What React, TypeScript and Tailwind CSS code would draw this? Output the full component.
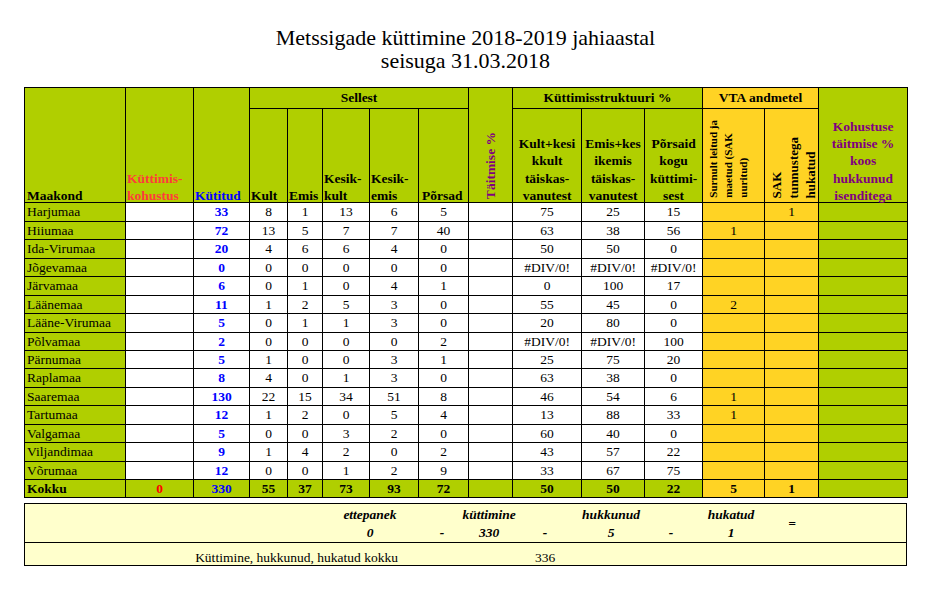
import type { ReactNode } from 'react'

const GREEN = 'bg-[#b0cf00]'
const YELLOW = 'bg-[#ffd324]'

type Row = [string, string, string, string, string, string, string, string, string, string, string, string]

const ROWS: Row[] = [
  ['Harjumaa', '33', '8', '1', '13', '6', '5', '75', '25', '15', '', '1'],
  ['Hiiumaa', '72', '13', '5', '7', '7', '40', '63', '38', '56', '1', ''],
  ['Ida-Virumaa', '20', '4', '6', '6', '4', '0', '50', '50', '0', '', ''],
  ['Jõgevamaa', '0', '0', '0', '0', '0', '0', '#DIV/0!', '#DIV/0!', '#DIV/0!', '', ''],
  ['Järvamaa', '6', '0', '1', '0', '4', '1', '0', '100', '17', '', ''],
  ['Läänemaa', '11', '1', '2', '5', '3', '0', '55', '45', '0', '2', ''],
  ['Lääne-Virumaa', '5', '0', '1', '1', '3', '0', '20', '80', '0', '', ''],
  ['Põlvamaa', '2', '0', '0', '0', '0', '2', '#DIV/0!', '#DIV/0!', '100', '', ''],
  ['Pärnumaa', '5', '1', '0', '0', '3', '1', '25', '75', '20', '', ''],
  ['Raplamaa', '8', '4', '0', '1', '3', '0', '63', '38', '0', '', ''],
  ['Saaremaa', '130', '22', '15', '34', '51', '8', '46', '54', '6', '1', ''],
  ['Tartumaa', '12', '1', '2', '0', '5', '4', '13', '88', '33', '1', ''],
  ['Valgamaa', '5', '0', '0', '3', '2', '0', '60', '40', '0', '', ''],
  ['Viljandimaa', '9', '1', '4', '2', '0', '2', '43', '57', '22', '', ''],
  ['Võrumaa', '12', '0', '0', '1', '2', '9', '33', '67', '75', '', ''],
]

const COLS = [
  'w-[101px]', 'w-[68px]', 'w-[56px]', 'w-[38px]', 'w-[35px]', 'w-[47px]', 'w-[49px]', 'w-[50px]',
  'w-[44px]', 'w-[69px]', 'w-[63px]', 'w-[58px]', 'w-[62px]', 'w-[54px]', 'w-[89px]',
]

function Th({ children, className = '', ...rest }: { children?: ReactNode; className?: string; colSpan?: number; rowSpan?: number }) {
  return (
    <th {...rest} className={`border border-black align-bottom font-bold ${className}`}>
      {children}
    </th>
  )
}

function Td({ children, className = '' }: { children?: ReactNode; className?: string }) {
  return <td className={`border border-black p-0 text-center leading-none ${className}`}>{children}</td>
}

// multi-line header text sits a little low in the cell
function Lines({ children, lh = 'leading-[17px]' }: { children: ReactNode; lh?: string }) {
  return <span className={`block translate-y-[2px] ${lh}`}>{children}</span>
}

// bottom box: word over number, at fixed offsets
const SUM = [
  { top: 'ettepanek', bottom: '0', ml: 'ml-[323px]' },
  { top: '', bottom: '-', ml: 'ml-[28px]' },
  { top: 'küttimine', bottom: '330', ml: 'ml-[3px]' },
  { top: '', bottom: '-', ml: 'ml-[12px]' },
  { top: 'hukkunud', bottom: '5', ml: 'ml-[22px]' },
  { top: '', bottom: '-', ml: 'ml-[16px]' },
  { top: 'hukatud', bottom: '1', ml: 'ml-[16px]' },
]

export default function App() {
  return (
    <div className="h-[603px] w-[936px] bg-white font-['Liberation_Serif','Times_New_Roman',serif] text-black">
      <div className="ml-[24px] w-[883px] pt-[26px]">
        <h1 className="text-center text-[22px] leading-[23px]">
          Metssigade küttimine 2018-2019 jahiaastal
          <br />
          seisuga 31.03.2018
        </h1>

        <table className="mt-[15px] w-[883px] table-fixed border-collapse text-[13.5px]">
          <colgroup>
            {COLS.map((c, i) => <col key={i} className={c} />)}
          </colgroup>
          <thead>
            <tr className="h-[21px]">
              <Th rowSpan={2} className={`${GREEN} px-[2px] text-left leading-[13px]`}>Maakond</Th>
              <Th rowSpan={2} className={`${GREEN} px-[1px] text-left text-[#ff3b3b]`}>
                <Lines>Küttimis-<br />kohustus</Lines>
              </Th>
              <Th rowSpan={2} className={`${GREEN} px-[1px] text-left leading-[13px] text-[#0000ff]`}>Kütitud</Th>
              <Th colSpan={5} className={`${GREEN} align-middle text-center`}>Sellest</Th>
              <Th rowSpan={2} className={GREEN}>
                <span className="inline-block translate-y-[3px] rotate-180 leading-[16px] text-[#800080] [writing-mode:vertical-rl]">
                  Täitmise %
                </span>
              </Th>
              <Th colSpan={3} className={`${GREEN} align-middle text-center`}>Küttimisstruktuuri %</Th>
              <Th colSpan={2} className={`${YELLOW} align-middle text-center`}>VTA andmetel</Th>
              <Th rowSpan={2} className={`${GREEN} text-center text-[#800080]`}>
                <Lines lh="leading-[17.3px]">
                  Kohustuse<br />täitmise %<br />koos<br />hukkunud<br />isenditega
                </Lines>
              </Th>
            </tr>
            <tr className="h-[94px]">
              <Th className={`${GREEN} px-[1px] text-left leading-[13px]`}>Kult</Th>
              <Th className={`${GREEN} px-[1px] text-left leading-[13px]`}>Emis</Th>
              <Th className={`${GREEN} px-[1px] text-left`}>
                <Lines>Kesik-<br />kult</Lines>
              </Th>
              <Th className={`${GREEN} px-[1px] text-left`}>
                <Lines>Kesik-<br />emis</Lines>
              </Th>
              <Th className={`${GREEN} px-[3px] text-left leading-[13px]`}>Põrsad</Th>
              <Th className={`${GREEN} text-center`}>
                <Lines lh="leading-[17.3px]">
                  Kult+kesi<br />kkult<br />täiskas-<br />vanutest
                </Lines>
              </Th>
              <Th className={`${GREEN} text-center`}>
                <Lines lh="leading-[17.3px]">
                  Emis+kes<br />ikemis<br />täiskas-<br />vanutest
                </Lines>
              </Th>
              <Th className={`${GREEN} text-center`}>
                <Lines lh="leading-[17.3px]">
                  Põrsaid<br />kogu<br />küttimi-<br />sest
                </Lines>
              </Th>
              <Th className={`${YELLOW} px-[3px] text-left`}>
                <span className="inline-block translate-y-[2px] rotate-180 text-[11px] leading-[15px] [writing-mode:vertical-rl]">
                  Surnult leitud ja<br />maetud (SAK<br />uuritud)
                </span>
              </Th>
              <Th className={`${YELLOW} px-[3px] text-left`}>
                <span className="inline-block translate-y-[2px] rotate-180 text-[13px] leading-[17px] [writing-mode:vertical-rl]">
                  SAK<br />tunnustega<br />hukatud
                </span>
              </Th>
            </tr>
          </thead>
          <tbody>
            {ROWS.map((r) => (
              <tr key={r[0]} className="h-[18.47px]">
                <Td className={`${GREEN} px-[2px] text-left`}>{r[0]}</Td>
                <Td />
                <Td className="font-bold text-[#0000ff]">{r[1]}</Td>
                <Td>{r[2]}</Td>
                <Td>{r[3]}</Td>
                <Td>{r[4]}</Td>
                <Td>{r[5]}</Td>
                <Td>{r[6]}</Td>
                <Td />
                <Td>{r[7]}</Td>
                <Td>{r[8]}</Td>
                <Td>{r[9]}</Td>
                <Td className={YELLOW}>{r[10]}</Td>
                <Td className={YELLOW}>{r[11]}</Td>
                <Td className={GREEN} />
              </tr>
            ))}
            <tr className="h-[18px] font-bold">
              <Td className={`${GREEN} px-[2px] text-left`}>Kokku</Td>
              <Td className={`${GREEN} text-[#ff0000]`}>0</Td>
              <Td className={`${GREEN} text-[#0000ff]`}>330</Td>
              <Td className={GREEN}>55</Td>
              <Td className={GREEN}>37</Td>
              <Td className={GREEN}>73</Td>
              <Td className={GREEN}>93</Td>
              <Td className={GREEN}>72</Td>
              <Td className={GREEN} />
              <Td className={GREEN}>50</Td>
              <Td className={GREEN}>50</Td>
              <Td className={GREEN}>22</Td>
              <Td className={YELLOW}>5</Td>
              <Td className={YELLOW}>1</Td>
              <Td className={GREEN} />
            </tr>
          </tbody>
        </table>

        <div className="mt-[5px] border border-black bg-[#ffffcc] text-[13.5px]">
          <div className="flex h-[39px] items-start border-b border-black pt-[2px] font-bold italic">
            {SUM.map((s, i) => (
              <div key={i} className={`${s.ml} flex w-11 flex-col items-center leading-[18px]`}>
                <span className="whitespace-nowrap">{s.top || '\u00a0'}</span>
                <span className="whitespace-nowrap">{s.bottom}</span>
              </div>
            ))}
            <span className="ml-[17px] w-11 self-center text-center leading-[18px]">=</span>
          </div>
          <div className="flex h-[22px] items-end pb-[1px] leading-[12px]">
            <span className="w-[373px] whitespace-nowrap text-right">Küttimine, hukkunud, hukatud kokku</span>
            <span className="ml-[135px] w-6 text-center">336</span>
          </div>
        </div>
      </div>
    </div>
  )
}
